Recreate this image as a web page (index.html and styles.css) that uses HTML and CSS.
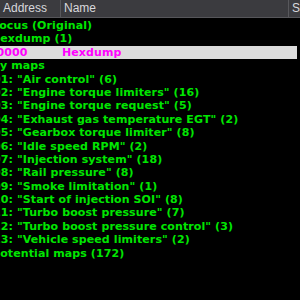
FILE: index.html
```html
<!DOCTYPE html>
<html lang="en">
<head>
  <meta charset="UTF-8" />
  <title>Map tree</title>
  <link rel="stylesheet" href="styles.css">
</head>
<body>
  <div class="header">
    <div class="col col-addr">Address</div>
    <div class="col col-name">Name</div>
    <div class="col col-size">Size</div>
  </div>

  <div class="tree">
    <div class="row"><span class="focus">Focus (Original)</span></div>
    <div class="row"><span class="hex">Hexdump (1)</span></div>
    <div class="row selected">
      <span class="addr">000000</span>
      <span class="name">Hexdump</span>
    </div>
    <div class="row"><span class="mine">My maps</span></div>
    <div class="row"><span class="item">01: "Air control" (6)</span></div>
    <div class="row"><span class="item">02: "Engine torque limiters" (16)</span></div>
    <div class="row"><span class="item">03: "Engine torque request" (5)</span></div>
    <div class="row"><span class="item">04: "Exhaust gas temperature EGT" (2)</span></div>
    <div class="row"><span class="item">05: "Gearbox torque limiter" (8)</span></div>
    <div class="row"><span class="item">06: "Idle speed RPM" (2)</span></div>
    <div class="row"><span class="item">07: "Injection system" (18)</span></div>
    <div class="row"><span class="item">08: "Rail pressure" (8)</span></div>
    <div class="row"><span class="item">09: "Smoke limitation" (1)</span></div>
    <div class="row"><span class="item">10: "Start of injection SOI" (8)</span></div>
    <div class="row"><span class="item">11: "Turbo boost pressure" (7)</span></div>
    <div class="row"><span class="item">12: "Turbo boost pressure control" (3)</span></div>
    <div class="row"><span class="item">13: "Vehicle speed limiters" (2)</span></div>
    <div class="row"><span class="potential">Potential maps (172)</span></div>
  </div>
</body>
</html>
```

FILE: styles.css
```css
body {
  margin: 0;
  background: #000;
  font-family: "DejaVu Sans", sans-serif;
  overflow: hidden;
}
.header {
  display: flex;
  height: 17px;
  background: #3b3b3f;
  border-bottom: 1px solid #56565a;
  color: #d8d8dc;
  font-family: "Liberation Sans", sans-serif;
  font-size: 12px;
  line-height: 17px;
}
.col {
  padding-left: 3px;
  border-right: 1px solid #58585c;
  white-space: nowrap;
  overflow: hidden;
}
.col-addr {
  width: 57px;
}
.col-name {
  width: 224px;
}
.col-size {
  flex: 1;
  border-right: none;
}
.tree {
  padding-top: 1px;
}
.row {
  display: flex;
  height: 13.4px;
  line-height: 14px;
  font-size: 11px;
  font-weight: bold;
  letter-spacing: 0.1px;
  color: #00e600;
  white-space: nowrap;
  overflow: hidden;
}
.row.selected {
  background: #dcdcdc;
  color: #ff00ff;
  margin-right: 3px;
}

/* tree is scrolled sideways, so first letters are cut */
.focus {
  margin-left: -8px;
}
.hex {
  margin-left: -9px;
}
.mine {
  margin-left: -11px;
}
.item {
  margin-left: -7px;
}
.potential {
  margin-left: -8px;
}
.addr {
  margin-left: -19px;
  width: 81px;
}
```
